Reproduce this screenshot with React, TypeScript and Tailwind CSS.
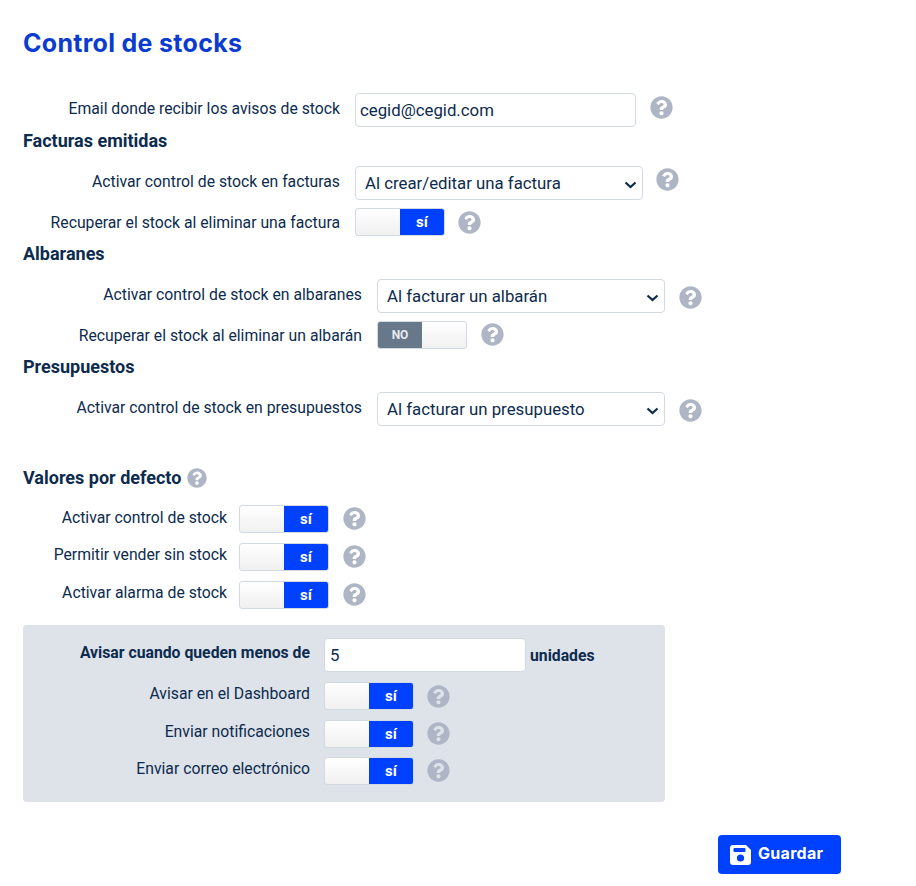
import React from "react";
import { FaQuestionCircle } from "react-icons/fa";

const Help = ({ className = "" }: { className?: string }) => (
  <FaQuestionCircle className={`text-[#aeb6c6] shrink-0 w-[23px] h-[23px] ${className}`} />
);

const Toggle = ({ on = true }: { on?: boolean }) => (
  <div className="flex w-[90px] h-[28px] shrink-0 rounded-[3px] border border-[#d3d9e1] overflow-hidden bg-gradient-to-b from-white to-[#f0f0f0] font-bold text-white">
    {on ? (
      <>
        <div className="flex-1" />
        <div className="w-[44px] bg-[#0040ff] flex items-center justify-center text-[15px]">sí</div>
      </>
    ) : (
      <>
        <div className="w-[44px] bg-[#66788a] flex items-center justify-center text-[#e8ebef] text-[12px]">NO</div>
        <div className="flex-1" />
      </>
    )}
  </div>
);

const Label = ({ w, children, bold = false, className = "" }: { w: string; children: React.ReactNode; bold?: boolean; className?: string }) => (
  <div className={`${w} shrink-0 text-right text-[15.75px] leading-[26px] ${bold ? "font-bold" : ""} ${className}`}>{children}</div>
);

const SelectField = ({ value }: { value: string }) => (
  <div className="relative w-[288px] h-[34px] shrink-0">
    <select
      defaultValue={value}
      className="appearance-none w-full h-full bg-white border border-[#d3d9e1] rounded-[4px] pl-[9px] pt-[2px] text-[16.8px] text-[#0c2b4e] outline-none"
    >
      <option>{value}</option>
    </select>
    <svg className="absolute right-[6px] top-[15px] w-[13px] h-[8px] pointer-events-none" viewBox="0 0 13 8" fill="none">
      <path d="M1.5 1.5 L6.5 6 L11.5 1.5" stroke="#0c2b4e" strokeWidth="2.2" />
    </svg>
  </div>
);

const Heading = ({ children, className = "" }: { children: React.ReactNode; className?: string }) => (
  <h3 className={`text-[18px] leading-[24px] font-bold text-[#0c2b4e] ${className}`}>{children}</h3>
);

type ToggleRowProps = {
  w: string;
  label: string;
  on?: boolean;
  className: string;
  labelClass: string;
  toggleMl: string;
  helpClass: string;
};

const ToggleRow = ({ w, label, on = true, className, labelClass, toggleMl, helpClass }: ToggleRowProps) => (
  <div className={`flex items-start ${className}`}>
    <Label w={w} className={labelClass}>{label}</Label>
    <div className={toggleMl}><Toggle on={on} /></div>
    <Help className={helpClass} />
  </div>
);

const SelectRow = ({ w, label, value, className, helpClass }: { w: string; label: string; value: string; className: string; helpClass: string }) => (
  <div className={`flex items-start ${className}`}>
    <Label w={w} className="mt-[3px]">{label}</Label>
    <div className="ml-[15px]"><SelectField value={value} /></div>
    <Help className={helpClass} />
  </div>
);

export default function App() {
  return (
    <div className="min-h-[886px] w-[916px] bg-white pl-[23px] pt-[28px] text-[#0c2b4e] font-['Roboto',sans-serif]">
      <h1 className="font-['Inter',sans-serif] text-[25px] tracking-[0.3px] leading-[30px] font-bold text-[#0a3ccf]">Control de stocks</h1>

      <div className="flex items-start mt-[35px]">
        <Label w="w-[317px]" className="mt-[3px]">Email donde recibir los avisos de stock</Label>
        <input
          readOnly
          value="cegid@cegid.com"
          className="ml-[15px] w-[281px] h-[34px] border border-[#d3d9e1] rounded-[4px] px-[4px] pb-[1px] text-[16.8px] text-[#0c2b4e] outline-none"
        />
        <Help className="ml-[14px] mt-[3px]" />
      </div>

      <Heading className="mt-[2px]">Facturas emitidas</Heading>
      <SelectRow w="w-[317px]" label="Activar control de stock en facturas" value="Al crear/editar una factura" className="mt-[13px]" helpClass="ml-[13px] mt-[2px]" />
      <ToggleRow w="w-[317px]" label="Recuperar el stock al eliminar una factura" className="mt-[8px]" labelClass="mt-[2px]" toggleMl="ml-[15px]" helpClass="ml-[13px] mt-[3px]" />

      <Heading className="mt-[6px]">Albaranes</Heading>
      <SelectRow w="w-[339px]" label="Activar control de stock en albaranes" value="Al facturar un albarán" className="mt-[13px]" helpClass="ml-[14px] mt-[7px]" />
      <ToggleRow w="w-[339px]" label="Recuperar el stock al eliminar un albarán" on={false} className="mt-[8px]" labelClass="mt-[2px]" toggleMl="ml-[15px]" helpClass="ml-[14px] mt-[2px]" />

      <Heading className="mt-[6px]">Presupuestos</Heading>
      <SelectRow w="w-[339px]" label="Activar control de stock en presupuestos" value="Al facturar un presupuesto" className="mt-[13px]" helpClass="ml-[14px] mt-[7px]" />

      <div className="flex items-center mt-[40px]">
        <Heading>Valores por defecto</Heading>
        <FaQuestionCircle className="ml-[6px] text-[#aeb6c6] w-[20px] h-[20px]" />
      </div>
      <ToggleRow w="w-[204px]" label="Activar control de stock" className="mt-[15px]" labelClass="mt-[0px]" toggleMl="ml-[12px]" helpClass="ml-[14px] mt-[2px]" />
      <ToggleRow w="w-[204px]" label="Permitir vender sin stock" className="mt-[10px]" labelClass="mt-[-1px]" toggleMl="ml-[12px]" helpClass="ml-[14px] mt-[2px]" />
      <ToggleRow w="w-[204px]" label="Activar alarma de stock" className="mt-[10px]" labelClass="mt-[-1px]" toggleMl="ml-[12px]" helpClass="ml-[14px] mt-[2px]" />

      <div className="w-[642px] h-[177px] mt-[16px] bg-[#dee2e9] rounded-[4px] pt-[13px]">
        <div className="flex items-start">
          <Label w="w-[287px]" bold className="mt-[2px]">Avisar cuando queden menos de</Label>
          <input
            readOnly
            value="5"
            className="ml-[14px] w-[202px] h-[34px] bg-white border border-[#d3d9e1] rounded-[4px] px-[5px] text-[16.8px] text-[#0c2b4e] outline-none"
          />
          <span className="ml-[4px] mt-[5px] text-[15.75px] leading-[26px] font-bold">unidades</span>
        </div>
        <ToggleRow w="w-[287px]" label="Avisar en el Dashboard" className="mt-[10px]" labelClass="mt-[-1px]" toggleMl="ml-[14px]" helpClass="ml-[13px] mt-[3px]" />
        <ToggleRow w="w-[287px]" label="Enviar notificaciones" className="mt-[10px]" labelClass="mt-[-1px]" toggleMl="ml-[14px]" helpClass="ml-[13px] mt-[2px]" />
        <ToggleRow w="w-[287px]" label="Enviar correo electrónico" className="mt-[9px]" labelClass="mt-[-1px]" toggleMl="ml-[14px]" helpClass="ml-[13px] mt-[2px]" />
      </div>

      <div className="w-[818px] flex justify-end mt-[33px]">
        <button className="flex items-center pl-[12px] gap-[7px] w-[123px] h-[39px] rounded-[4px] bg-[#0040ff] text-white font-['Inter',sans-serif] text-[16px] tracking-[0.3px] font-bold">
          <svg className="w-[21px] h-[20px] shrink-0" viewBox="0 0 21 20">
            <path d="M3 0 H16 L21 5 V17 A3 3 0 0 1 18 20 H3 A3 3 0 0 1 0 17 V3 A3 3 0 0 1 3 0 Z" fill="#ffffff" />
            <rect x="3.5" y="3" width="12" height="4" rx="1" fill="#0040ff" />
            <circle cx="10.5" cy="13" r="3.6" fill="#0040ff" />
          </svg>
          <span className="pb-[3px]">Guardar</span>
        </button>
      </div>
    </div>
  );
}
